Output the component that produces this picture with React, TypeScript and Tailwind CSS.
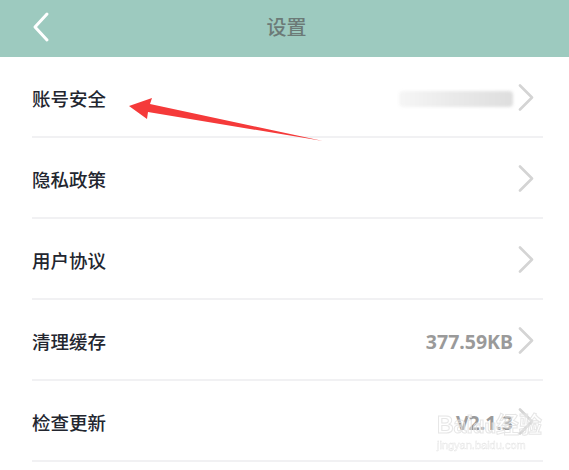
import React from 'react';

const ROWS: { label: string; value?: string; blurred?: boolean }[] = [
  { label: '账号安全', blurred: true },
  { label: '隐私政策' },
  { label: '用户协议' },
  { label: '清理缓存', value: '377.59KB' },
  { label: '检查更新', value: 'V2.1.3' },
];

function Chevron({ className = '' }: { className?: string }) {
  return (
    <svg width="17" height="27" viewBox="0 0 17 27" className={className}>
      <path d="M2 1.5 L14 13.5 L2 25.5" fill="none" stroke="#d4d4d4" strokeWidth="2.6" strokeLinecap="round" strokeLinejoin="round" />
    </svg>
  );
}

export default function App() {
  return (
    <div
      className="relative w-[569px] h-[470px] bg-white overflow-hidden"
      style={{ fontFamily: '"Noto Sans CJK SC", "Noto Sans", sans-serif' }}
    >
      {/* header */}
      <div className="h-[57px] bg-[#9dcabf] flex items-center relative">
        <svg width="20" height="32" viewBox="0 0 20 32" className="ml-[31px] -mt-[3px]">
          <path d="M16 3 L4 16 L16 29" fill="none" stroke="#ffffff" strokeWidth="3" strokeLinecap="round" strokeLinejoin="round" />
        </svg>
        <div className="absolute inset-0 flex items-center justify-center -mt-[4px] pl-[4px] text-[20px] font-medium text-[#6c7a77]">
          设置
        </div>
      </div>

      {/* rows */}
      <div>
        {ROWS.map((row) => (
          <div key={row.label} className="ml-[32px] mr-[26px] h-[81px] border-b-2 border-[#f1f1f3] flex items-center pt-[4px]">
            <span className="text-[18.5px] font-medium text-[#23262f]">{row.label}</span>
            <div className="ml-auto flex items-center gap-[5px] pr-[8px]">
              {row.blurred && (
                <div className="w-[114px] h-[16px] bg-gradient-to-r from-[#f6f6f6] via-[#e9e9e9] to-[#dedede] blur-[1.5px] rounded-sm" />
              )}
              {row.value && (
                <span className="text-[19.5px] font-bold text-[#9a9a9a]" style={{ fontFamily: '"Noto Sans", sans-serif' }}>
                  {row.value}
                </span>
              )}
              <Chevron className="-mt-[3px]" />
            </div>
          </div>
        ))}
      </div>

      {/* red annotation arrow */}
      <svg className="absolute left-0 top-0 pointer-events-none" width="569" height="470">
        <polygon points="129,106 152,98 150,104 323,141 148,112 147,119" fill="#f53a3a" />
      </svg>

      {/* watermark */}
      <div className="absolute left-[437px] top-[414px] pointer-events-none leading-none text-white/40 [-webkit-text-stroke:1px_#e0e0e0] opacity-80">
        <div className="text-[23px] font-bold" style={{ fontFamily: '"Liberation Sans", "Noto Sans CJK SC", sans-serif' }}>Bai<span className="text-[19px]">du</span>经验</div>
        <div className="text-[11px] mt-[3px] [-webkit-text-stroke:0.4px_#dcdcdc]" style={{ fontFamily: '"Liberation Sans", sans-serif' }}>jingyan.baidu.com</div>
      </div>
    </div>
  );
}
